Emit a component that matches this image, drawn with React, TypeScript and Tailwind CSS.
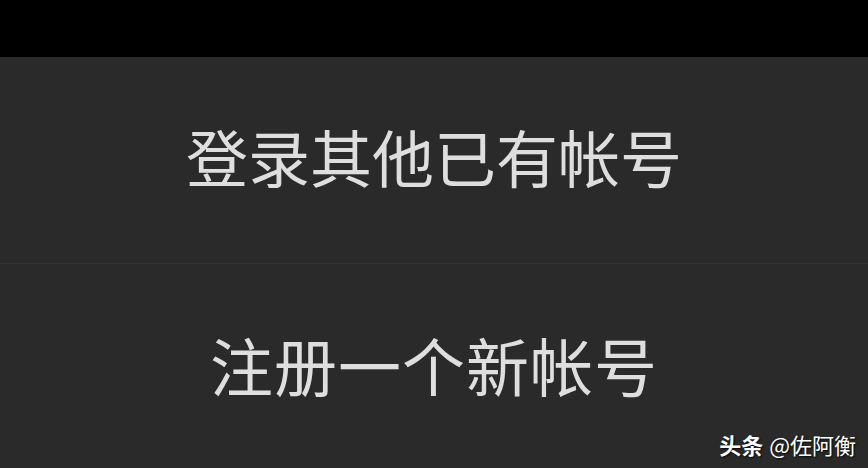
export default function App() {
  return (
    <div
      className="relative w-[868px] h-[468px] bg-[#2a2a2a] flex flex-col overflow-hidden"
      style={{ fontFamily: '"Noto Sans CJK SC", "Noto Sans", sans-serif' }}
    >
      <div className="h-[57px] bg-black shrink-0" />
      <div className="h-[207px] flex items-center justify-center pb-[8px] border-b border-[#353532]">
        <span className="text-[62px] leading-none text-[#dedede]">登录其他已有帐号</span>
      </div>
      <div className="flex-1 flex items-center justify-center pb-[6px]">
        <span className="text-[63px] leading-none text-[#dedede] tracking-[1px]">注册一个新帐号</span>
      </div>

      {/* source watermark */}
      <div className="absolute right-[12px] bottom-[13px] flex items-center gap-[6px] text-[22px] leading-none text-white [text-shadow:1px_1px_2px_rgba(0,0,0,0.9)]">
        <span className="font-bold">头条</span>
        <span>@佐阿衡</span>
      </div>
    </div>
  )
}
